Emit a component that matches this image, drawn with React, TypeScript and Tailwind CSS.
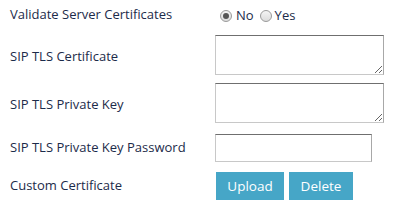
import React, { useState } from 'react';

const Radio: React.FC<{ checked: boolean; onClick: () => void }> = ({ checked, onClick }) => (
  <span
    onClick={onClick}
    className="inline-flex items-center justify-center w-[12px] h-[12px] rounded-full border border-[#9a9a9a] bg-gradient-to-b from-[#f4f4f4] to-[#dcdcdc] cursor-pointer"
  >
    {checked && <span className="w-[6px] h-[6px] rounded-full bg-[#555]" />}
  </span>
);

const App: React.FC = () => {
  const [validate, setValidate] = useState(false);

  const label = 'w-[205px] shrink-0 text-[13px] text-[#1c2b4a]';
  const field =
    'block border border-[#c8c8c8] border-t-[#6f6f6f] border-r-[#a8a8a8] bg-white outline-none';

  return (
    <div className="w-[404px] h-[212px] bg-white pl-[10px] font-['Open_Sans',sans-serif]">
      <div className="flex items-center h-[30px]">
        <span className={label}>Validate Server Certificates</span>
        <div className="flex items-center text-[13px] text-[#1c2b4a] pl-[5px] pt-[1px]">
          <Radio checked={!validate} onClick={() => setValidate(false)} />
          <span className="ml-[4px] mr-[6px]">No</span>
          <Radio checked={validate} onClick={() => setValidate(true)} />
          <span className="ml-[3px]">Yes</span>
        </div>
      </div>

      <div className="flex items-center h-[49px]">
        <span className={`${label} pt-[5px]`}>SIP TLS Certificate</span>
        <textarea className={`${field} w-[169px] h-[40px] resize`} />
      </div>

      <div className="flex items-center h-[47px]">
        <span className={`${label} pt-[5px]`}>SIP TLS Private Key</span>
        <textarea className={`${field} w-[169px] h-[40px] resize`} />
      </div>

      <div className="flex items-center h-[44px]">
        <span className={label}>SIP TLS Private Key Password</span>
        <input type="password" className={`${field} w-[157px] h-[28px]`} />
      </div>

      <div className="flex items-center h-[32px]">
        <span className={label}>Custom Certificate</span>
        <div className="flex gap-[5px] pl-[1px]">
          <button className="w-[68px] h-[28px] bg-[#46a6c7] text-white text-[13.5px]">Upload</button>
          <button className="w-[64px] h-[28px] bg-[#46a6c7] text-white text-[13.5px]">Delete</button>
        </div>
      </div>
    </div>
  );
};

export default App;
